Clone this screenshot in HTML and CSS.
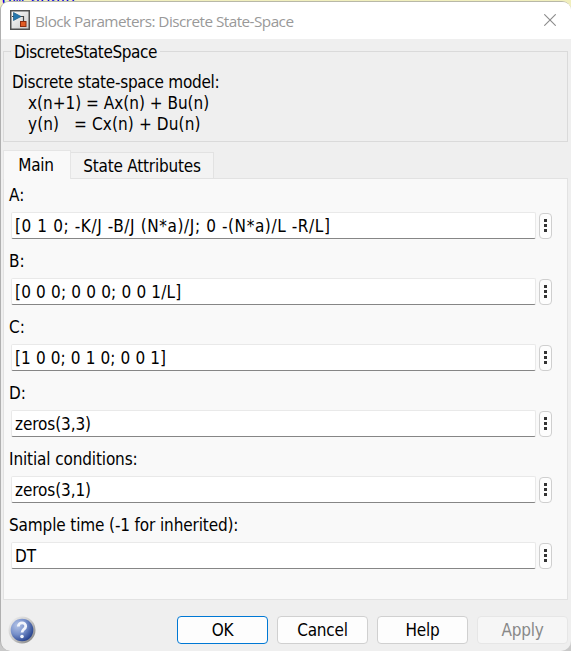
FILE: index.html
```html
<!DOCTYPE html>
<html lang="en">
<head>
<meta charset="utf-8">
<title>Block Parameters: Discrete State-Space</title>
<link rel="stylesheet" href="styles.css">
</head>
<body>
<div class="behind">ow again</div>
<main class="dialog">
  <header class="titlebar">
    <svg class="appicon" width="20" height="20" viewBox="0 0 20 20">
      <defs><linearGradient id="tile" x2="1" y2="1"><stop stop-color="#fff"/><stop offset="1" stop-color="#c9c9c9"/></linearGradient></defs>
      <rect x=".75" y=".75" width="18.5" height="18.5" fill="url(#tile)" stroke="#505050" stroke-width="1.5"/>
      <path d="M2 6.5h2M10 6.5h3.5V12" fill="none" stroke="#444" stroke-width="1.2"/>
      <path d="M3.5 2.5 11 6.5 3.5 10.5z" fill="#2678b0" stroke="#155783" stroke-width=".7"/>
      <rect x="10.5" y="11.5" width="5.5" height="5" fill="#e15b24" stroke="#8c2d10"/>
    </svg>
    <span class="title">Block Parameters: Discrete State-Space</span>
    <svg class="close" width="12" height="12" viewBox="0 0 12 12"><path d="M.3.3l11.4 11.4M11.7.3.3 11.7" stroke="#8b8b8b" stroke-width="1.1"/></svg>
  </header>
  <fieldset class="info">
    <legend><span class="t-legend">DiscreteStateSpace</span></legend>
    <div class="line"><span class="t-model">Discrete state-space model:</span></div>
    <div class="line eq"><span class="t-x">x(n+1) = Ax(n) + Bu(n)</span></div>
    <div class="line eq"><span class="t-y">y(n)&nbsp;&nbsp; = Cx(n) + Du(n)</span></div>
  </fieldset>
  <nav class="tabs">
    <div class="tab active"><span class="t-tab">Main</span></div>
    <div class="tab"><span class="t-tab">State Attributes</span></div>
  </nav>
  <section class="panel">
    <div class="field"><label>A:</label><div class="row"><div class="input"><span class="t-a">[0 1 0; -K/J -B/J (N*a)/J; 0 -(N*a)/L -R/L]</span></div><button class="more"><i></i><i></i><i></i></button></div></div>
    <div class="field"><label>B:</label><div class="row"><div class="input"><span class="t-b">[0 0 0; 0 0 0; 0 0 1/L]</span></div><button class="more"><i></i><i></i><i></i></button></div></div>
    <div class="field"><label>C:</label><div class="row"><div class="input"><span class="t-c">[1 0 0; 0 1 0; 0 0 1]</span></div><button class="more"><i></i><i></i><i></i></button></div></div>
    <div class="field"><label>D:</label><div class="row"><div class="input"><span class="t-z">zeros(3,3)</span></div><button class="more"><i></i><i></i><i></i></button></div></div>
    <div class="field"><label><span class="t-init">Initial conditions:</span></label><div class="row"><div class="input"><span class="t-z">zeros(3,1)</span></div><button class="more"><i></i><i></i><i></i></button></div></div>
    <div class="field"><label><span class="t-init">Sample time (-1 for inherited):</span></label><div class="row"><div class="input"><span>DT</span></div><button class="more"><i></i><i></i><i></i></button></div></div>
  </section>
  <footer class="footer">
    <svg class="help" width="28" height="28" viewBox="0 0 28 28">
      <defs>
        <linearGradient id="ring" x1="0" y1="0" x2="1" y2="1"><stop stop-color="#f4f4f4"/><stop offset=".5" stop-color="#c8c8c8"/><stop offset="1" stop-color="#777"/></linearGradient>
        <radialGradient id="ball" cx=".3" cy=".3" r=".8"><stop stop-color="#b3c3e6"/><stop offset=".5" stop-color="#7790ca"/><stop offset="1" stop-color="#1f3b88"/></radialGradient>
      </defs>
      <circle cx="14" cy="14" r="13.5" fill="url(#ring)"/>
      <circle cx="14" cy="14" r="11.3" fill="url(#ball)"/>
      <path d="M10.3 10.5C10.3 5.5 18 5.7 17.7 10.3c-.2 3-3.7 3-3.7 6.2" fill="none" stroke="#f2f5fc" stroke-width="2.8"/>
      <circle cx="14" cy="20.5" r="1.8" fill="#f2f5fc"/>
    </svg>
    <button class="btn primary">OK</button>
    <button class="btn">Cancel</button>
    <button class="btn">Help</button>
    <button class="btn" disabled>Apply</button>
  </footer>
</main>
</body>
</html>
```
FILE: styles.css
```css
* { box-sizing: border-box; }
body {
  margin: 0; width: 571px; height: 651px; overflow: hidden; position: relative;
  background: linear-gradient(#f1efbd 0 24px, #c9c9c9 34px);
  font: 17px/21px "DejaVu Sans Condensed", "DejaVu Sans", sans-serif;
  font-stretch: condensed;
  color: #000;
}
button { font: inherit; color: inherit; padding: 0; margin: 0; }
span { white-space: nowrap; }
.behind { position: absolute; left: 2px; top: -10px; color: #0000e0; font: 17px/20px "Liberation Sans", sans-serif; letter-spacing: .7px; }
.dialog {
  position: relative; width: 571px; height: 650px; margin-top: 1px; display: flex; flex-direction: column;
  background: #efefef; border: 1px solid #b8b8a8; border-left-color: #b0b0b0; border-right: 0; border-bottom: 0;
  border-radius: 9px 9px 10px 10px; overflow: hidden; padding: 0 3px 0 2px;
}
.titlebar { height: 37px; margin: 0 -3px 0 -2px; padding: 0 15px 1px 9px; background: #fff; display: flex; align-items: center; flex: none; }
.title { margin-left: 5px; color: #999; font: 15.3px/20px "Open Sans", sans-serif; letter-spacing: -.54px; flex: 1; padding-top: 2px; }
.info { margin: 0; height: 103px; padding: 9px 8px 0; border: 1px solid #dadada; flex: none; min-width: 0; }
.info legend { padding: 0 3px; height: 24px; line-height: 26px; margin-left: -1px; }
.line { height: 21px; }
.eq { padding-left: 16px; }
.tabs { display: flex; align-items: flex-end; height: 29px; margin-top: 8px; position: relative; z-index: 1; margin-bottom: -1px; flex: none; }
.tab { height: 27px; width: 143px; border: 1px solid #e2e2e2; border-left: 0; background: #f3f3f3; display: flex; align-items: center; justify-content: center; padding-top: 2px; }
.tab.active { height: 29px; width: 68px; background: #f9f9f9; border: 1px solid #e5e5e5; border-bottom: 0; padding: 1px 2px 0 0; }
.panel { height: 422px; border: 1px solid #e2e2e2; background: #f9f9f9; padding: 5px 14px 0 5px; flex: none; }
.field { height: 66px; }
.field label { display: block; height: 28px; line-height: 23px; }
.row { display: flex; align-items: center; gap: 3px; margin-left: 2px; height: 27px; }
.input { width: 525px; height: 27px; background: #fff; border: 1px solid #e9e9e9; border-bottom-color: #868686; border-radius: 2px; padding: 1px 0 0 3px; display: flex; align-items: center; }
.more { width: 13px; height: 26px; border: 1px solid #cfcfcf; border-radius: 4px; background: #fdfdfd; display: flex; flex-direction: column; align-items: center; justify-content: center; gap: 2px; }
.more i { width: 3px; height: 3px; background: #333; }
.footer { display: flex; gap: 9px; margin-top: 16px; height: 29px; align-items: flex-start; }
.help { margin: 0 -9px 0 5px; flex: none; }
.btn { width: 91px; height: 28px; border: 1px solid #d0d0d0; border-radius: 4px; background: #fdfdfd; flex: none; letter-spacing: -.2px; padding-top: 1px; }
.btn.primary { border-color: #0078d4; margin-left: auto; }
.btn:disabled { background: #f6f6f6; border-color: #e6e6e6; color: #888; }
.t-legend { letter-spacing: -.4px; }
.t-model { letter-spacing: -.27px; }
.t-y { letter-spacing: .12px; }
.t-tab { letter-spacing: -.22px; }
.t-a { letter-spacing: .6px; }
.t-b { letter-spacing: .18px; }
.t-c { letter-spacing: .12px; }
.t-z { letter-spacing: -.1px; }
.t-init { letter-spacing: -.13px; }
```
